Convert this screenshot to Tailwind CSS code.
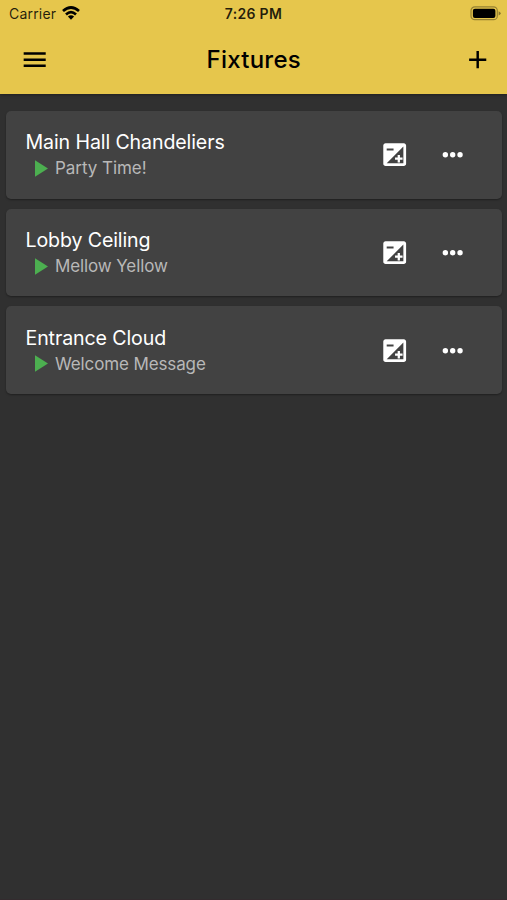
<!DOCTYPE html>
<html lang="en">
<head>
<meta charset="utf-8">
<title>Fixtures</title>
<script src="https://cdn.jsdelivr.net/npm/@tailwindcss/browser@4"></script>
</head>
<body class="bg-[#303030] font-['Inter',sans-serif]">
<svg class="hidden">
  <symbol id="exposure" viewBox="0 0 24 24"><path fill-rule="evenodd" d="M20 2H4c-1.1 0-2 .9-2 2v16c0 1.1.9 2 2 2h16c1.1 0 2-.9 2-2V4c0-1.1-.9-2-2-2zM5 6.6h6v1.8H5zM19.6 4.9v14.6H5z"/><path d="M14.6 12.2h2v2.3h2.3v2h-2.3v2.3h-2v-2.3h-2.3v-2h2.3z"/></symbol>
  <symbol id="more" viewBox="0 0 24 24"><circle cx="6" cy="12" r="2.2"/><circle cx="12" cy="12" r="2.2"/><circle cx="18" cy="12" r="2.2"/></symbol>
</svg>
<div class="flex h-[900px] w-[507px] flex-col overflow-hidden border-b border-[#332b2e]">
  <header class="h-[94px] shrink-0 bg-[#e6c64c] text-black shadow-[0_1px_3px_rgba(0,0,0,0.35)]">
    <div class="grid h-[27px] grid-cols-3 items-center pl-[9px] pr-[9px]">
      <div class="flex items-center gap-[6px] text-[14px] text-black/85"><span class="tracking-[0.2px]">Carrier</span>
        <svg class="-mt-[2px] h-[14px] w-[18px]" viewBox="0 0 18 14" fill="none" stroke="#000" stroke-width="2.7"><path d="M1 5.1Q9-2.1 17 5.1"/><path d="M4 8.5Q9 3.9 14 8.5"/><path d="M9 13.8L5.9 10.6Q9 8 12.1 10.6Z" fill="#000" stroke="none"/></svg>
      </div>
      <div class="text-center text-[14px] font-semibold tracking-[0.3px] text-black/85">7:26 PM</div>
      <div class="-mr-[3px] flex justify-end">
        <svg class="h-[15px] w-[31px]" viewBox="0 0 31 15"><rect x="1" y=".9" width="26.3" height="12.8" rx="3.8" fill="none" stroke="#000" stroke-opacity=".35" stroke-width="1.2"/><rect x="2.9" y="2.7" width="22.5" height="9.2" rx="2"/><path d="M28.6 5.2q2.1.8 2.1 2.1t-2.1 2.1z" fill-opacity=".4"/></svg>
      </div>
    </div>
    <div class="grid h-[66px] grid-cols-[1fr_auto_1fr] items-center pl-[20px] pr-[14.5px]">
      <svg class="h-[29.4px] w-[29.4px]" viewBox="0 0 24 24"><path d="M3 18h18v-2H3v2zm0-5h18v-2H3v2zm0-7v2h18V6H3z"/></svg>
      <h1 class="-ml-[5px] text-[24px] font-medium leading-[30px] tracking-[0.25px]">Fixtures</h1>
      <svg class="h-[29.4px] w-[29.4px] justify-self-end" viewBox="0 0 24 24"><path d="M19 13h-6v6h-2v-6H5v-2h6V5h2v6h6v2z"/></svg>
    </div>
  </header>
  <main class="flex flex-col gap-[10px] pl-[6px] pr-[5px] pt-[17px]">
    <section class="flex h-[87.7px] items-center rounded-[5px] bg-[#424242] pl-[19.5px] pr-[34.7px] shadow-[0_1px_2px_rgba(0,0,0,0.35)]">
      <div class="flex-1 pt-[1px]">
        <h2 class="text-[19.6px] leading-[26px] tracking-[-0.12px] text-white">Main Hall Chandeliers</h2>
        <p class="flex items-center pl-[9.5px] text-[17px] leading-[26px] tracking-[-0.05px] text-[#b8b8b8]"><svg class="mr-[7px] h-[17px] w-[13px]" viewBox="0 0 13 17"><path d="M0 .2L13 8.5L0 16.8Z" fill="#4caf50"/></svg>Party Time!</p>
      </div>
      <svg class="mr-[30px] h-[27.4px] w-[27.4px] fill-white"><use href="#exposure"/></svg>
      <svg class="h-[29.4px] w-[29.4px] fill-white"><use href="#more"/></svg>
    </section>
    <section class="flex h-[87.7px] items-center rounded-[5px] bg-[#424242] pl-[19.5px] pr-[34.7px] shadow-[0_1px_2px_rgba(0,0,0,0.35)]">
      <div class="flex-1 pt-[1px]">
        <h2 class="text-[19.6px] leading-[26px] tracking-[-0.12px] text-white">Lobby Ceiling</h2>
        <p class="flex items-center pl-[9.5px] text-[17px] leading-[26px] tracking-[-0.12px] text-[#b8b8b8]"><svg class="mr-[7px] h-[17px] w-[13px]" viewBox="0 0 13 17"><path d="M0 .2L13 8.5L0 16.8Z" fill="#4caf50"/></svg>Mellow Yellow</p>
      </div>
      <svg class="mr-[30px] h-[27.4px] w-[27.4px] fill-white"><use href="#exposure"/></svg>
      <svg class="h-[29.4px] w-[29.4px] fill-white"><use href="#more"/></svg>
    </section>
    <section class="flex h-[87.7px] items-center rounded-[5px] bg-[#424242] pl-[19.5px] pr-[34.7px] shadow-[0_1px_2px_rgba(0,0,0,0.35)]">
      <div class="flex-1 pt-[1px]">
        <h2 class="text-[19.6px] leading-[26px] tracking-[-0.12px] text-white">Entrance Cloud</h2>
        <p class="flex items-center pl-[9.5px] text-[17px] leading-[26px] tracking-[-0.12px] text-[#b8b8b8]"><svg class="mr-[7px] h-[17px] w-[13px]" viewBox="0 0 13 17"><path d="M0 .2L13 8.5L0 16.8Z" fill="#4caf50"/></svg>Welcome Message</p>
      </div>
      <svg class="mr-[30px] h-[27.4px] w-[27.4px] fill-white"><use href="#exposure"/></svg>
      <svg class="h-[29.4px] w-[29.4px] fill-white"><use href="#more"/></svg>
    </section>
  </main>
</div>
</body>
</html>
